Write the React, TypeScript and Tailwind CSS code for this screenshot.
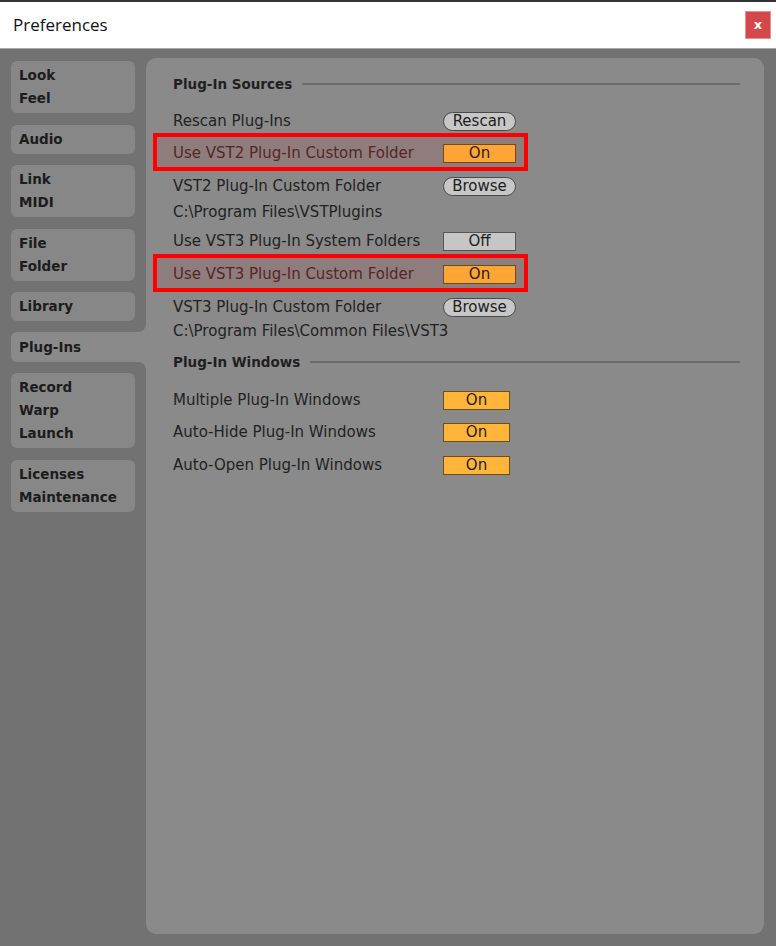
import type { ReactNode } from "react"

const font = { fontFamily: '"DejaVu Sans", Verdana, sans-serif' }

type Tab = { lines: string[]; mt: string }

const tabsTop: Tab[] = [
  { lines: ["Look", "Feel"], mt: "mt-0" },
  { lines: ["Audio"], mt: "mt-[12px]" },
  { lines: ["Link", "MIDI"], mt: "mt-[11px]" },
  { lines: ["File", "Folder"], mt: "mt-[12px]" },
  { lines: ["Library"], mt: "mt-[11px]" },
]

const tabsBottom: Tab[] = [
  { lines: ["Record", "Warp", "Launch"], mt: "mt-0" },
  { lines: ["Licenses", "Maintenance"], mt: "mt-[12px]" },
]

function TabButton({ tab }: { tab: Tab }) {
  return (
    <div className={`${tab.mt} ml-[11px] w-[124px] rounded-[6px] bg-[#878787] px-[8px] py-[3px]`}>
      {tab.lines.map((l) => (
        <div key={l} className="text-[13.5px] font-bold leading-[23px] text-[#1c1c1c]">
          {l}
        </div>
      ))}
    </div>
  )
}

function Pill({ children }: { children: ReactNode }) {
  return (
    <div className="flex h-[19px] w-[73px] items-center justify-center rounded-full border-[1.5px] border-[#4a4a4a] bg-[#c7c7c7] text-[15px] leading-none text-[#1e1e1e]">
      {children}
    </div>
  )
}

function Toggle({ on, yellow, narrow }: { on: boolean; yellow?: boolean; narrow?: boolean }) {
  const color = on ? (yellow ? "bg-[#ffb43a]" : "bg-[#ffa436]") : "bg-[#c6c6c6]"
  return (
    <div
      className={`flex h-[19px] ${narrow ? "w-[67px]" : "w-[73px]"} items-center justify-center border-[1.5px] ${
        on ? "border-[#6e4d1c]" : "border-[#555]"
      } ${color} text-[15px] leading-none text-[#1e1e1e]`}
    >
      {on ? "On" : "Off"}
    </div>
  )
}

function Row({ label, cls, children }: { label: string; cls: string; children?: ReactNode }) {
  return (
    <div className={`flex items-center pl-[27px] pt-[3px] ${cls}`}>
      <div className="w-[270px] whitespace-nowrap text-[15px] text-[#222]">{label}</div>
      {children}
    </div>
  )
}

function Highlight({ label }: { label: string }) {
  return (
    <div className="ml-[7px] flex h-[38px] w-[375px] items-center border-4 border-[#ff0000] bg-[#8f7d7d] pl-[16px] pt-[2px]">
      <div className="w-[270px] whitespace-nowrap text-[15px] text-[#552626]">{label}</div>
      <Toggle on />
    </div>
  )
}

function Heading({ title, cls }: { title: string; cls: string }) {
  return (
    <div className={`flex h-[20px] items-center pl-[27px] pr-[24px] ${cls}`}>
      <div className="whitespace-nowrap text-[13.5px] font-bold text-[#1f1f1f]">{title}</div>
      <div className="ml-[10px] h-[2px] flex-1 bg-[#6c6c6c]" />
    </div>
  )
}

export default function App() {
  return (
    <div className="flex min-h-screen w-[776px] flex-col bg-[#727272]" style={font}>
      <div className="flex h-[49px] items-center justify-between border-t-2 border-b border-t-[#333] border-b-[#a8a8a8] bg-white pl-[13px] pr-[5px]">
        <div className="text-[17px] text-[#111]" style={{ fontFamily: '"Open Sans", sans-serif' }}>
          Preferences
        </div>
        <div className="flex h-[28px] w-[26px] items-center justify-center border border-[#e79090] bg-[#d4474a] text-[13px] font-bold text-white">
          x
        </div>
      </div>

      <div className="flex flex-1 pb-[12px] pr-[12px]">
        <div className="flex w-[146px] flex-col pt-[12px]">
          {tabsTop.map((t) => (
            <TabButton key={t.lines[0]} tab={t} />
          ))}
          <div className="relative mt-[11px] mb-[11px] ml-[11px] flex h-[30px] items-center rounded-l-[6px] bg-[#8a8a8a] pl-[8px]">
            <div className="text-[13.5px] font-bold text-[#1c1c1c]">Plug-Ins</div>
            <div className="absolute -top-[8px] right-0 h-[8px] w-[8px] bg-[#8a8a8a]">
              <div className="h-full w-full rounded-br-[8px] bg-[#727272]" />
            </div>
            <div className="absolute -bottom-[8px] right-0 h-[8px] w-[8px] bg-[#8a8a8a]">
              <div className="h-full w-full rounded-tr-[8px] bg-[#727272]" />
            </div>
          </div>
          {tabsBottom.map((t) => (
            <TabButton key={t.lines[0]} tab={t} />
          ))}
        </div>

        <div className="mt-[9px] flex flex-1 flex-col rounded-[10px] bg-[#8a8a8a] pt-[16px]">
          <Heading title="Plug-In Sources" cls="" />
          <Row label="Rescan Plug-Ins" cls="mt-[13px] h-[26px]">
            <Pill>Rescan</Pill>
          </Row>
          <Highlight label="Use VST2 Plug-In Custom Folder" />
          <Row label="VST2 Plug-In Custom Folder" cls="h-[28px]">
            <Pill>Browse</Pill>
          </Row>
          <Row label="C:\Program Files\VSTPlugins" cls="h-[24px]" />
          <Row label="Use VST3 Plug-In System Folders" cls="mt-[3px] h-[28px]">
            <Toggle on={false} />
          </Row>
          <Highlight label="Use VST3 Plug-In Custom Folder" />
          <Row label="VST3 Plug-In Custom Folder" cls="h-[28px]">
            <Pill>Browse</Pill>
          </Row>
          <Row label="C:\Program Files\Common Files\VST3" cls="h-[20px]" />

          <Heading title="Plug-In Windows" cls="mt-[12px]" />
          <Row label="Multiple Plug-In Windows" cls="mt-[13px] h-[28px]">
            <Toggle on yellow narrow />
          </Row>
          <Row label="Auto-Hide Plug-In Windows" cls="mt-[4px] h-[28px]">
            <Toggle on yellow narrow />
          </Row>
          <Row label="Auto-Open Plug-In Windows" cls="mt-[5px] h-[28px]">
            <Toggle on yellow narrow />
          </Row>
        </div>
      </div>
    </div>
  )
}
